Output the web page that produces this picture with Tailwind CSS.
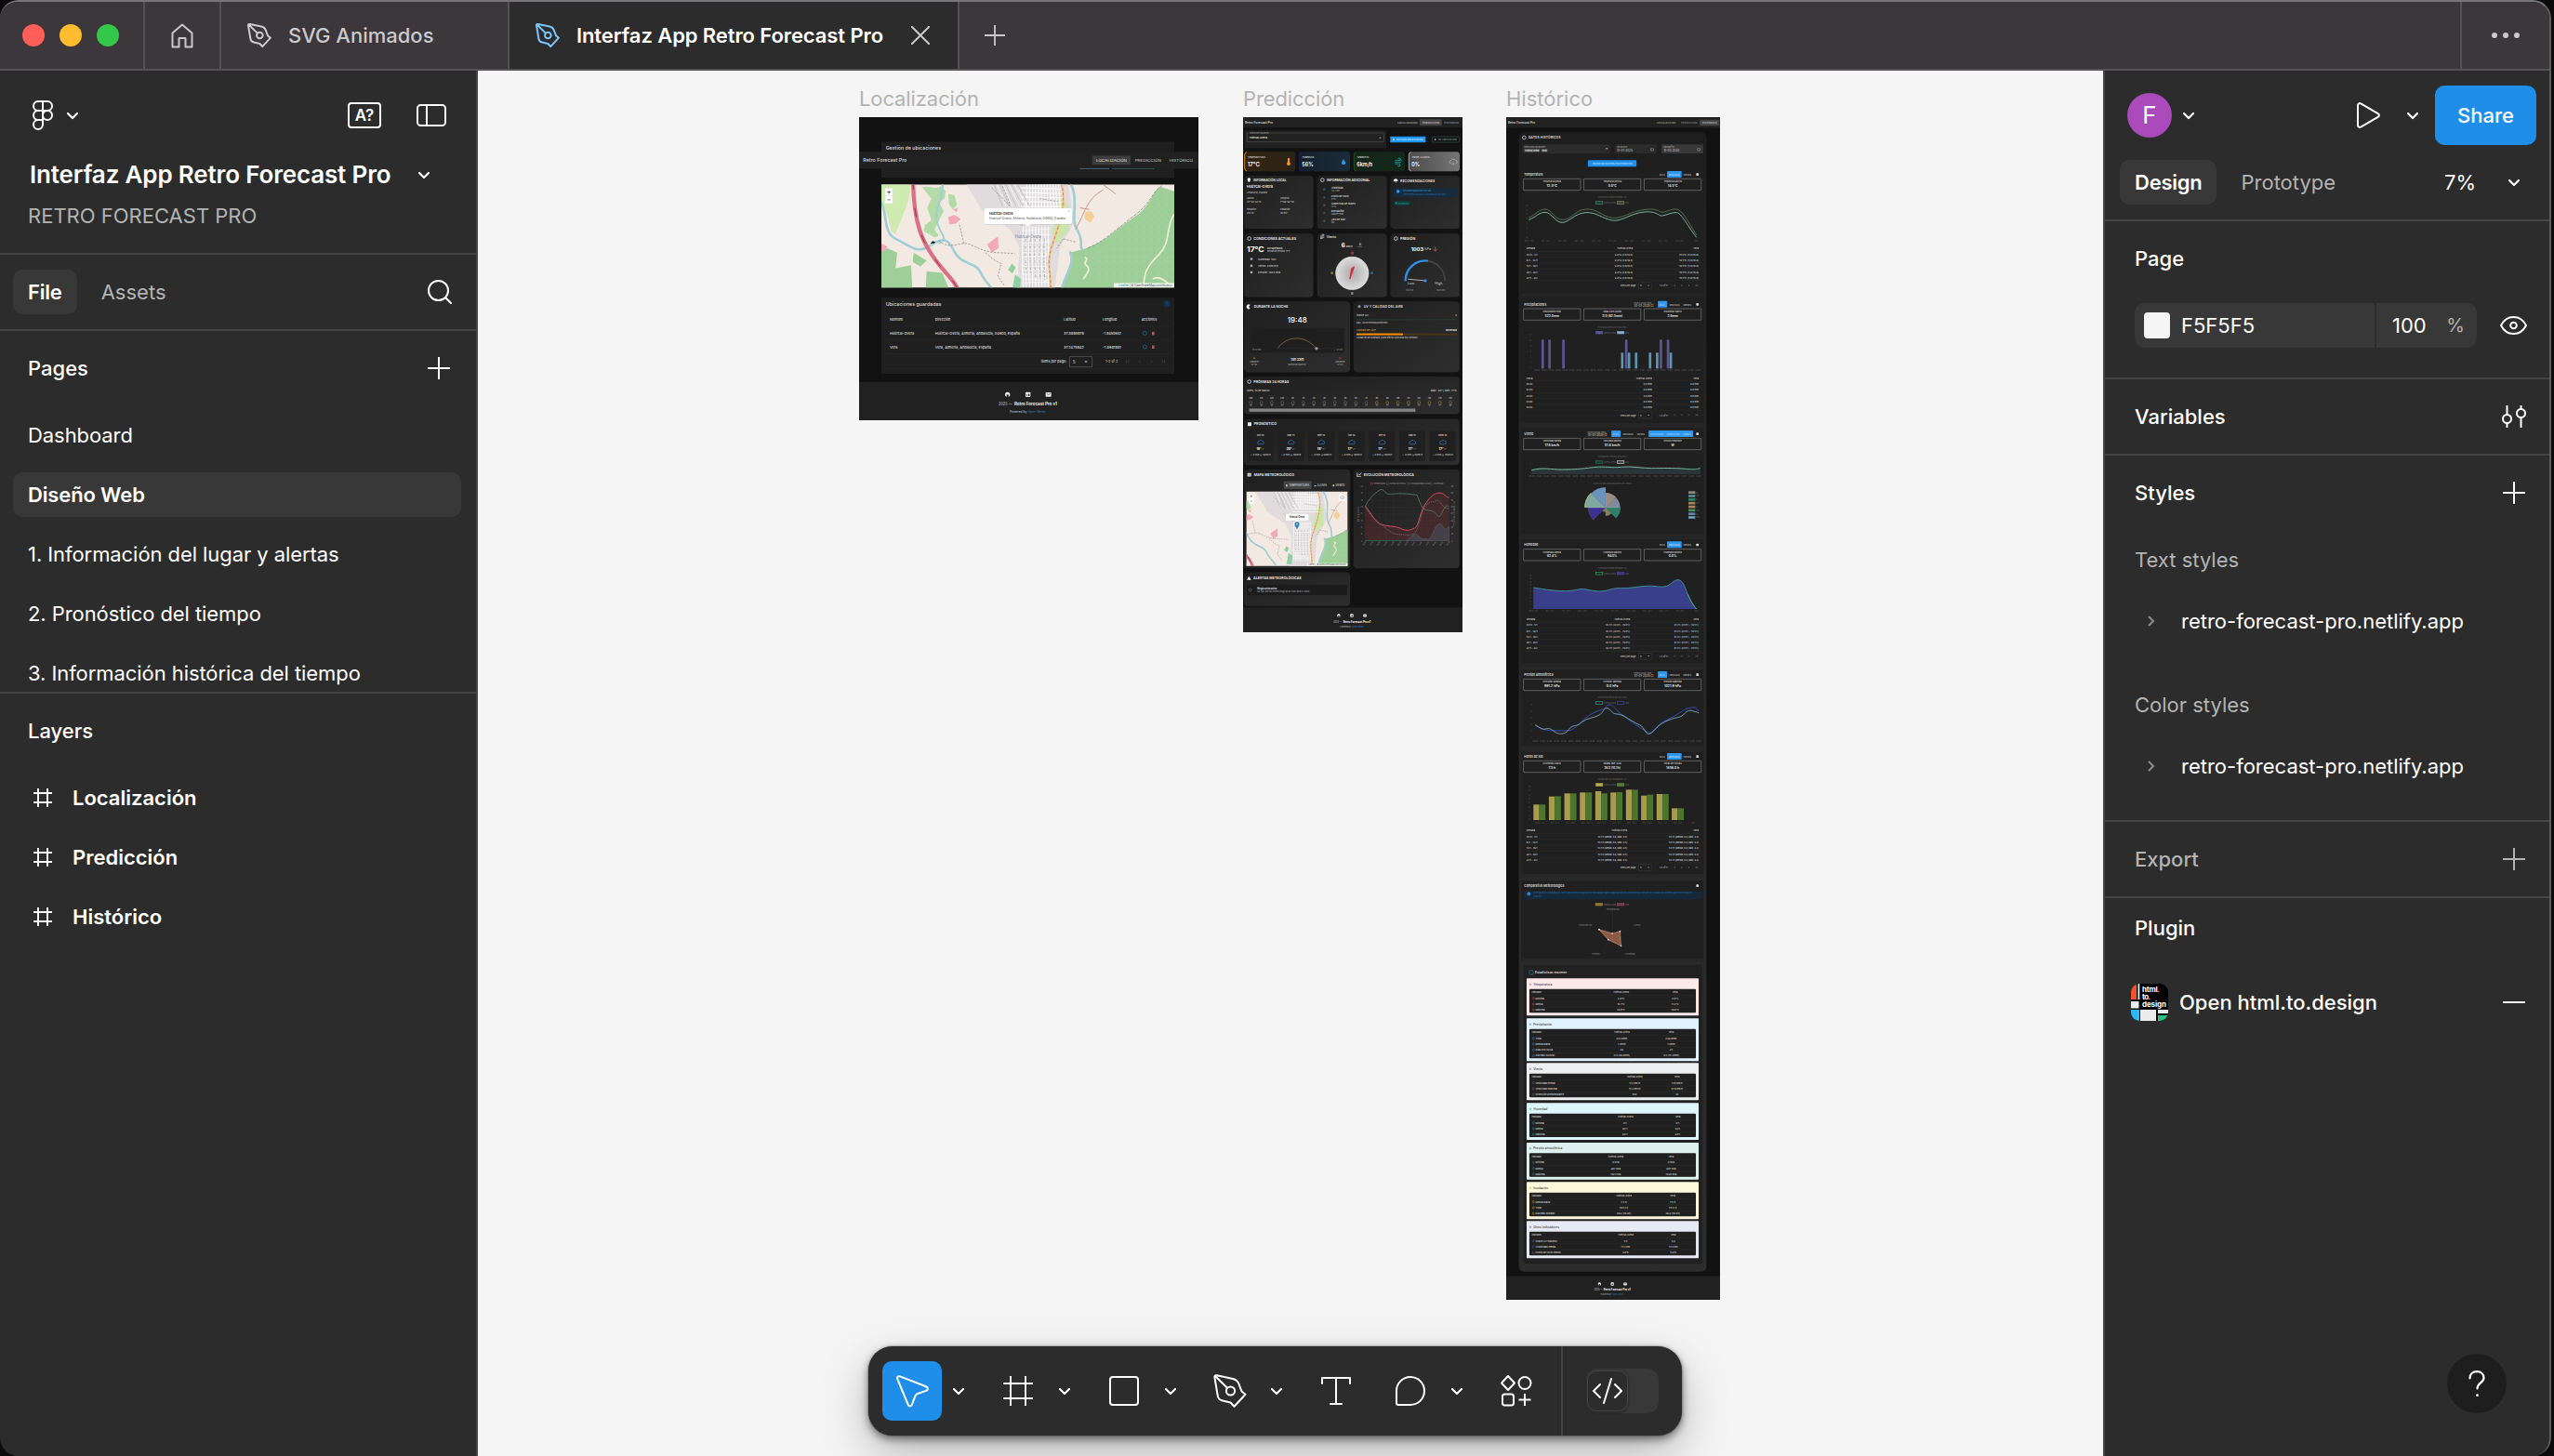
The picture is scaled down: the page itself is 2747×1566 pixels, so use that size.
<!DOCTYPE html>
<html lang="es">
<head>
<meta charset="utf-8">
<title>Interfaz App Retro Forecast Pro</title>
<script src="https://cdn.jsdelivr.net/npm/@tailwindcss/browser@4"></script>
</head>
<body class="h-[1566px] w-[2747px] overflow-hidden bg-[#0b0b0b] font-['Inter',sans-serif] text-[22px] leading-8 text-white antialiased">
<svg class="hidden">
  <symbol id="chev" viewBox="0 0 14 9"><path d="M2 2l5 5 5-5" fill="none" stroke="currentColor" stroke-width="2.2" stroke-linecap="round" stroke-linejoin="round"/></symbol>
  <symbol id="pen" viewBox="0 0 36 36"><g fill="none" stroke="currentColor" stroke-linejoin="round" stroke-linecap="round"><path d="M1.5 3.8C1 1.8 2 1 3.8 1.3L21 5c4 .9 5.500 2.800 6.500 5.500l3 8 4 3.200-12 13-4-4.200L10 28.500C7 27.800 5 26 4.700 23zM2.500 2.500L15 14.700"/><circle cx="18.500" cy="18" r="4.600"/></g></symbol>
  <symbol id="frame" viewBox="0 0 32 32"><path d="M8 0v32M24 0v32M0 8h32M0 24h32" fill="none" stroke="currentColor"/></symbol>
  <symbol id="plus" viewBox="0 0 24 24"><path d="M12 0v24M0 12h24" fill="none" stroke="currentColor" stroke-width="2"/></symbol>
</svg>

<div class="flex h-[1566px] w-[2744px] flex-col overflow-hidden rounded-[20px] border-t-2 border-r-2 border-t-[#77757a] border-r-[#5c5c5c] bg-[#2c2c2c]">
  <!-- Window tabs -->
  <header class="flex h-[74px] shrink-0 items-stretch border-b-2 border-[#545255] bg-[#3b373b] text-[#cbc9cb]">
    <div class="flex w-[156px] items-center gap-4 border-r-2 border-[#545255] pl-6">
      <span class="size-6 rounded-full bg-[#ff5f57]"></span>
      <span class="size-6 rounded-full bg-[#febc2e]"></span>
      <span class="size-6 rounded-full bg-[#34c749]"></span>
    </div>
    <div class="flex w-[82px] items-center justify-center border-r-2 border-[#545255]">
      <svg class="h-[27px] w-6" viewBox="0 0 24 27" fill="none" stroke="currentColor" stroke-width="2" stroke-linejoin="round"><path d="M1.500 10.500L12 1.500l10.500 9V25.500H15.500V16h-7v9.500h-7z"/></svg>
    </div>
    <div class="flex w-[310px] items-center gap-[18px] border-r-2 border-[#545255] pl-7">
      <svg class="size-[26px]" stroke-width="2.800"><use href="#pen"/></svg>
      <span class="font-medium">SVG Animados</span>
    </div>
    <div class="flex w-[484px] items-center border-r-2 border-[#545255] bg-[#2c2c2c] pl-7 text-white">
      <svg class="mr-[18px] size-[26px] text-[#7cc4f8]" stroke-width="2.800"><use href="#pen"/></svg>
      <span class="whitespace-nowrap font-semibold tracking-[-0.09px]">Interfaz App Retro Forecast Pro</span>
      <svg class="ml-[30px] size-5 text-[#cbc9cb]" viewBox="0 0 20 20" fill="none" stroke="currentColor" stroke-width="2"><path d="M0 0l20 20M20 0L0 20"/></svg>
    </div>
    <div class="flex w-[76px] items-center justify-center"><svg class="size-[22px]"><use href="#plus"/></svg></div>
    <div class="ml-auto flex w-[96px] items-center justify-center border-l-2 border-[#545255]">
      <svg class="h-2 w-8" viewBox="0 0 32 8" fill="currentColor"><circle cx="4" cy="4" r="3"/><circle cx="16" cy="4" r="3"/><circle cx="28" cy="4" r="3"/></svg>
    </div>
  </header>

  <div class="flex min-h-0 flex-1">
    <!-- Left sidebar -->
    <aside class="flex w-[514px] shrink-0 flex-col border-r-2 border-[#444]">
      <div class="flex h-24 shrink-0 items-center pl-[35px] pr-8">
        <svg class="h-8 w-[22px]" viewBox="0 0 22 32" fill="none" stroke="currentColor" stroke-width="2"><path d="M11 1H6a5 5 0 0 0 0 10h5zM11 1h5a5 5 0 0 1 0 10h-5zM11 11H6a5 5 0 0 0 0 10h5zM11 21H6a5 5 0 1 0 5 5z"/><circle cx="16" cy="16" r="5"/></svg>
        <svg class="ml-[14px] h-[9px] w-[14px]"><use href="#chev"/></svg>
        <span class="ml-auto flex h-7 w-9 items-center justify-center rounded border-2 border-white text-[17px] font-semibold leading-none">A?</span>
        <svg class="ml-[38px] h-6 w-8" viewBox="0 0 32 24" fill="none" stroke="currentColor" stroke-width="2"><rect x="1" y="1" width="30" height="22" rx="3.500"/><path d="M11 1v22"/></svg>
      </div>
      <div class="flex h-8 shrink-0 items-center gap-[29px] pl-8">
        <h1 class="whitespace-nowrap text-[26px] font-semibold tracking-[-0.16px]">Interfaz App Retro Forecast Pro</h1>
        <svg class="h-[9px] w-[14px]"><use href="#chev"/></svg>
      </div>
      <div class="flex h-[70px] shrink-0 items-center border-b-2 border-[#444] pb-3 pl-[30px] text-[#b3b3b3]">RETRO FORECAST PRO</div>
      <div class="flex h-[82px] shrink-0 items-center gap-[10px] border-b-2 border-[#444] pl-[14px] pr-[26px]">
        <span class="flex h-12 items-center rounded-[10px] bg-[#383838] px-4 font-semibold tracking-[-0.2px]">File</span>
        <span class="px-4 text-[#b3b3b3]">Assets</span>
        <svg class="ml-auto size-[26px]" viewBox="0 0 26 26" fill="none" stroke="currentColor" stroke-width="2" stroke-linecap="round"><circle cx="11.500" cy="11.500" r="10.500"/><path d="M19 19l6 6"/></svg>
      </div>
      <div class="flex h-20 shrink-0 items-center justify-between pl-[30px] pr-7 font-medium">Pages<svg class="size-6"><use href="#plus"/></svg></div>
      <ul class="h-[308px] shrink-0 overflow-hidden pl-[14px] pr-4 tracking-[-0.07px]">
        <li class="flex h-16 items-center px-4">Dashboard</li>
        <li class="flex h-16 items-center"><span class="flex h-12 w-full items-center rounded-[10px] bg-[#383838] px-4 font-semibold tracking-[-0.15px]">Diseño Web</span></li>
        <li class="flex h-16 items-center px-4">1. Información del lugar y alertas</li>
        <li class="flex h-16 items-center px-4">2. Pronóstico del tiempo</li>
        <li class="flex h-16 items-center px-4">3. Información histórica del tiempo</li>
      </ul>
      <div class="flex h-[82px] shrink-0 items-center border-t-2 border-[#444] pl-[30px] font-medium">Layers</div>
      <ul class="font-semibold">
        <li class="flex h-16 items-center gap-[22px] pl-9"><svg class="size-5" stroke-width="3.200"><use href="#frame"/></svg>Localización</li>
        <li class="flex h-16 items-center gap-[22px] pl-9"><svg class="size-5" stroke-width="3.200"><use href="#frame"/></svg>Predicción</li>
        <li class="flex h-16 items-center gap-[22px] pl-9"><svg class="size-5" stroke-width="3.200"><use href="#frame"/></svg>Histórico</li>
      </ul>
    </aside>

    <!-- Canvas -->
    <main class="relative min-w-0 flex-1 overflow-hidden bg-[#f5f5f5] text-[#b3b3b3]">
      <div class="absolute left-[410px] top-[14px]"><p class="h-9 text-[22px] leading-8 tracking-[-0.1px]">Localización</p><svg id="loc" class="h-[326px] w-[365px]" viewBox="42 137 1095 979" preserveAspectRatio="none"></svg></div>
      <div class="absolute left-[823px] top-[14px]"><p class="h-9 text-[22px] leading-8 tracking-[-0.1px]">Predicción</p><svg id="pre" class="h-[554px] w-[236px]" viewBox="51 137 708 1663" preserveAspectRatio="none"></svg></div>
      <div class="absolute left-[1106px] top-[14px]"><p class="h-9 text-[22px] leading-8">Histórico</p><svg id="his" class="h-[1272px] w-[230px]" viewBox="59 137 691 3816" preserveAspectRatio="none"></svg></div>

      <!-- Toolbar -->
      <div class="absolute left-[420px] top-[1372px] flex h-24 w-[875px] items-center rounded-[26px] bg-[#2c2c2c] pl-[15px] text-white shadow-[0_0_2px_rgba(0,0,0,.6),0_4px_10px_rgba(0,0,0,.5),0_20px_50px_rgba(0,0,0,.25)]">
        <span class="flex size-16 items-center justify-center rounded-[10px] bg-[#1e8ee8]"><svg class="size-[35px]" viewBox="0 0 35 35" fill="none" stroke="currentColor" stroke-width="2" stroke-linejoin="round"><path d="M1.200 4.200C.6 2 2 .6 4 1.400L32 12.200c2.500 1.100 2.300 3.800 0 4.700L23 20c-1.500.5-2.200 1.300-2.800 2.800L17 31.500c-1 2.500-3.500 2.500-4.400 0z"/></svg></span>
        <span class="flex w-9 justify-center"><svg class="h-[9px] w-[14px]"><use href="#chev"/></svg></span>
        <span class="ml-[14px] flex size-16 items-center justify-center"><svg class="size-8" stroke-width="2"><use href="#frame"/></svg></span>
        <span class="flex w-9 justify-center"><svg class="h-[9px] w-[14px]"><use href="#chev"/></svg></span>
        <span class="ml-[14px] flex size-16 items-center justify-center"><svg class="size-8" viewBox="0 0 32 32" fill="none" stroke="currentColor" stroke-width="2"><rect x="1" y="1" width="30" height="30" rx="3"/></svg></span>
        <span class="flex w-9 justify-center"><svg class="h-[9px] w-[14px]"><use href="#chev"/></svg></span>
        <span class="ml-[14px] flex size-16 items-center justify-center"><svg class="size-9" stroke-width="2"><use href="#pen"/></svg></span>
        <span class="flex w-9 justify-center"><svg class="h-[9px] w-[14px]"><use href="#chev"/></svg></span>
        <span class="ml-[14px] flex size-16 items-center justify-center"><svg class="h-[30px] w-8" viewBox="0 0 32 30" fill="none" stroke="currentColor" stroke-width="2" stroke-linecap="round" stroke-linejoin="round"><path d="M1 7V1h30v6M16 1v28M10 29h12"/></svg></span>
        <span class="ml-4 flex size-16 items-center justify-center"><svg class="size-8" viewBox="0 0 32 32" fill="none" stroke="currentColor" stroke-width="2" stroke-linejoin="round"><path d="M1 16a15 15 0 1 1 15 15H3a2 2 0 0 1-2-2z"/></svg></span>
        <span class="flex w-9 justify-center"><svg class="h-[9px] w-[14px]"><use href="#chev"/></svg></span>
        <span class="ml-[14px] flex size-16 items-center justify-center"><svg class="size-[34px]" viewBox="0 0 34 34" fill="none" stroke="currentColor" stroke-width="2" stroke-linejoin="round"><path d="M8 1l7 7.500L8 16 1 8.500zM26 20v13M19.500 26.500h13"/><circle cx="26" cy="8.500" r="6.500"/><rect x="2" y="20.500" width="12" height="12" rx="2.500"/></svg></span>
        <span class="ml-4 h-24 w-0.5 bg-[#444]"></span>
        <span class="ml-[25px] flex h-12 w-[78px] items-center rounded-[12px] bg-[#383838] pl-px">
          <span class="flex h-11 w-11 items-center justify-center rounded-[10px] border border-[#444] bg-[#2c2c2c] shadow-[0_1px_3px_rgba(0,0,0,.4)]"><svg class="h-[30px] w-8 shrink-0" viewBox="0 0 32 30" fill="none" stroke="currentColor" stroke-width="2" stroke-linecap="round" stroke-linejoin="round"><path d="M8 8l-7 7 7 7M24 8l7 7-7 7M20 2l-8 26"/></svg></span>
        </span>
      </div>
    </main>

    <!-- Right sidebar -->
    <aside class="relative flex w-[480px] shrink-0 flex-col border-l-2 border-[#444]">
      <div class="flex h-24 shrink-0 items-center pl-6 pr-[14px]">
        <span class="flex size-12 items-center justify-center rounded-full bg-[#ab4abb] text-[26px]">F</span>
        <svg class="ml-[11px] h-[9px] w-[14px]"><use href="#chev"/></svg>
        <svg class="ml-auto h-[28px] w-[25px]" viewBox="0 0 25 28" fill="none" stroke="currentColor" stroke-width="2" stroke-linejoin="round"><path d="M1 3.500C1 1.300 2.800.5 4.600 1.600l18 10.600c1.800 1.100 1.800 2.500 0 3.600l-18 10.600C2.800 27.500 1 26.700 1 24.500z"/></svg>
        <svg class="ml-7 h-[9px] w-[14px]"><use href="#chev"/></svg>
        <span class="ml-[17px] flex h-16 w-[109px] items-center justify-center rounded-[10px] bg-[#1e8ee8] font-medium">Share</span>
      </div>
      <div class="flex h-[66px] shrink-0 items-start border-b-2 border-[#444] pl-4 pr-[31px]">
        <span class="flex h-12 items-center rounded-[10px] bg-[#383838] px-4 font-semibold tracking-[-0.25px]">Design</span>
        <span class="ml-[26px] flex h-12 items-center text-[#b3b3b3]">Prototype</span>
        <span class="ml-auto flex h-12 items-center">7%</span>
        <span class="ml-[34px] flex h-12 items-center"><svg class="h-[9px] w-[14px]"><use href="#chev"/></svg></span>
      </div>
      <div class="flex h-20 shrink-0 items-center pl-8 font-medium">Page</div>
      <div class="flex h-[90px] shrink-0 items-start justify-between border-b-2 border-[#444] pl-8 pr-6 pt-2">
        <div class="flex h-12 w-[368px] items-center rounded-[10px] bg-[#383838] pl-[10px]">
          <span class="size-7 rounded bg-[#f5f5f5]"></span><span class="ml-3 w-[208px]">F5F5F5</span>
          <span class="flex h-12 flex-1 items-center justify-between border-l-2 border-[#2c2c2c] pl-[17px] pr-[13px]">100<span class="text-[20px] text-[#b3b3b3]">%</span></span>
        </div>
        <span class="flex h-12 items-center"><svg class="h-5 w-[29px]" viewBox="0 0 29 20" fill="none" stroke="currentColor" stroke-width="2"><path d="M1 10C4 4 9 1 14.500 1S25 4 28 10c-3 6-8 9-13.500 9S4 16 1 10z"/><circle cx="14.500" cy="10" r="3.300"/></svg></span>
      </div>
      <div class="flex h-[82px] shrink-0 items-center justify-between border-b-2 border-[#444] pl-8 pr-[25px] font-medium">Variables<svg class="h-6 w-[26px]" viewBox="0 0 26 24" fill="none" stroke="currentColor" stroke-width="2"><circle cx="5.500" cy="14.500" r="4.500"/><path d="M5.500 0v10M5.500 19v5M20.500 0v4M20.500 13v11"/><circle cx="20.500" cy="8.500" r="4.500"/></svg></div>
      <div class="flex h-20 shrink-0 items-center justify-between pl-8 pr-[26px] font-medium">Styles<svg class="size-6"><use href="#plus"/></svg></div>
      <div class="flex h-16 shrink-0 items-center pl-8 text-[#b3b3b3]">Text styles</div>
      <div class="flex h-[68px] shrink-0 items-center gap-[28px] pl-[46px]"><svg class="h-3 w-2" viewBox="0 0 8 12" fill="none" stroke="#8c8c8c" stroke-width="2"><path d="M1 1l5 5-5 5"/></svg>retro-forecast-pro.netlify.app</div>
      <div class="mt-6 flex h-16 shrink-0 items-center pl-8 text-[#b3b3b3]">Color styles</div>
      <div class="flex h-[94px] shrink-0 items-center gap-[28px] border-b-2 border-[#444] pb-6 pl-[46px]"><svg class="h-3 w-2" viewBox="0 0 8 12" fill="none" stroke="#8c8c8c" stroke-width="2"><path d="M1 1l5 5-5 5"/></svg>retro-forecast-pro.netlify.app</div>
      <div class="flex h-[82px] shrink-0 items-center justify-between border-b-2 border-[#444] pl-8 pr-[26px] font-medium text-[#b3b3b3]">Export<svg class="size-6"><use href="#plus"/></svg></div>
      <div class="flex h-16 shrink-0 items-center pl-8 font-medium">Plugin</div>
      <div class="flex h-24 shrink-0 items-center pl-7 pr-[26px] font-medium">
        <svg class="size-10 rounded-[9px]" viewBox="0 0 40 40"><rect width="40" height="40" fill="#000"/><path d="M0 0h6v17H0z" fill="#f0532d"/><path d="M7.500 0h1.800v17H7.500zM0 19h8.500v7.500H0zM10 28h17v12H10zM29 28h11v4H29z" fill="#ececec"/><path d="M0 28h9v12H0z" fill="#2eb6f5"/><path d="M29 34h11v6H29z" fill="#2cc07c"/><g fill="#fff" font-size="8" font-weight="700"><text x="12" y="9" textLength="19">html.</text><text x="12" y="17" textLength="9">to.</text><text x="12" y="25" textLength="26">design</text></g></svg>
        <span class="ml-3 whitespace-nowrap">Open html.to.design</span>
        <span class="ml-auto h-0.5 w-6 bg-white"></span>
      </div>
      <span class="absolute bottom-[46px] right-[46px] flex size-16 items-center justify-center rounded-full bg-[#1e1e1e]"><svg class="h-7 w-[18px]" viewBox="0 0 18 28" fill="none" stroke="currentColor" stroke-width="2.200" stroke-linecap="round"><path d="M1.500 8.500C1.500 4 4.500 1.200 9 1.200S16.500 4 16.500 8c0 5-7 5.500-7 11.500"/><path d="M9.500 26.500v.3" stroke-width="2.600"/></svg></span>
    </aside>
  </div>
</div>

<script>
const esc = s => String(s).replace(/&/g, '&amp;').replace(/</g, '&lt;');
const T = (x, y, s, t, f = '#d8d8d8', a = 'start', w = 400) => `<text x="${x}" y="${y}" font-size="${s}" fill="${f}" text-anchor="${a}" font-weight="${w}">${esc(t)}</text>`;
const TL = (x, y, s, t, len, f = '#d8d8d8', w = 400) => `<text x="${x}" y="${y}" font-size="${s}" fill="${f}" font-weight="${w}" textLength="${len}" lengthAdjust="spacingAndGlyphs">${esc(t)}</text>`;
const R = (x, y, w, h, f, r = 0, s = 'none', sw = 2) => `<rect x="${x}" y="${y}" width="${w}" height="${h}" fill="${f}" rx="${r}" stroke="${s}" stroke-width="${sw}"/>`;
const P = (d, s, w = 2, f = 'none', e = '') => `<path d="${d}" stroke="${s}" stroke-width="${w}" fill="${f}" ${e}/>`;
const C = (x, y, r, f = 'none', s = 'none', w = 2) => `<circle cx="${x}" cy="${y}" r="${r}" fill="${f}" stroke="${s}" stroke-width="${w}"/>`;

// Street map of Huércal-Overa, shared by two screens
function town() {
  let o = R(60, 300, 1040, 440, '#f2eae2');
  o += P('M110 340H208C215 400 170 480 160 515L145 505C140 450 110 420 110 380Z', 'none', 0, '#cdebb0');
  o += P('M245 362C270 358 290 372 305 360L322 375 318 400 300 412 315 440 300 470 285 500 300 520 285 525 250 505 255 485 275 470 262 430 275 400ZM330 385l20 5 8 30-14 16-12-18z', 'none', 0, '#b3dba8');
  o += P('M110 550L165 575 160 625 210 615 215 720H110ZM218 575L260 600 240 620 215 605ZM260 635L310 640 345 720H255Z', 'none', 0, '#9fcf98');
  o += P('M770 562C830 545 870 500 930 460S985 375 1015 362L1070 380V720H690C690 660 735 620 722 575Z', 'none', 0, '#9fcf98');
  for (let y = 400; y < 690; y += 22) for (let x = 730; x < 1060; x += 24) if (x + y > 1400) o += C(x + (y % 44 ? 0 : 12), y, 2.500, '#93c78d');
  o += P('M380 340L715 340 735 480 690 560 670 720H550L560 560 530 500 440 440Z', 'none', 0, '#e0dcde');
  o += P('M690 400L715 420 720 500 680 545 665 510Z', 'none', 0, '#cbe6a8');
  o += P('M535 610l12 12-10 20-14-12zM545 645l20 15-5 40h-25z', 'none', 0, '#8fd0a0');
  for (let i = 0; i < 13; i++) o += P(`M${585 + i * 9} 335l${-4 + i} 95`, '#fff', 3);
  for (let i = 0; i < 7; i++) o += P(`M565 ${350 + i * 15}l135 ${6 - i}`, '#fff', 3);
  for (let i = 0; i < 9; i++) o += P(`M${470 + i * 9} 335l${35 + i * 2} 90`, i % 2 ? '#fff' : '#b9b4b6', 2);
  for (let i = 0; i < 9; i++) o += P(`M${572 + i * 10} 490q${-6 + i} 90 0 195`, '#fff', 3);
  for (let i = 0; i < 13; i++) o += P(`M566 ${505 + i * 14}l92 ${-8 + (i * 5) % 14}`, '#fff', 2);
  for (let i = 0; i < 5; i++) o += P(`M${580 + i * 15} 530q-4 60 2 ${110 + i * 7}`, '#8a888d', 2, 'none', 'stroke-dasharray="9 6 3 5"');
  o += P('M470 365l60 60M500 350l30 70M520 450l50 40M640 350l50 -4M625 400l60 10', '#8b878a', 2, 'none', 'stroke-dasharray="7 4"');
  o += P('M455 548L490 522 492 560 470 575ZM330 460l20-8 20 14-15 14-22 4zM115 545l18 10-8 15h-14zM345 435l16-5-4 15z', 'none', 0, '#f4a9b6');
  o += P('M770 445l20-5 12 18-14 20-18-12z', 'none', 0, '#f3cf9c');
  o += P('M112 410C135 450 118 510 160 530S230 582 272 552 330 530 350 572 420 605 435 640 470 680 490 720', '#a2cdd8', 8);
  o += P('M310 340C320 400 280 430 295 480S330 520 300 545', '#a2cdd8', 6);
  o += P('M715 335C760 400 720 460 745 500S750 550 762 565M722 570C745 620 700 640 690 720', '#a2cdd8', 8);
  o += P('M690 335C720 420 680 500 662 560S668 660 658 720', '#f0c084', 7) + P('M690 335C720 420 680 500 662 560S668 660 658 720', '#b06a5a', 2, 'none', 'stroke-dasharray="8 8"');
  o += P('M216 340C218 480 245 540 290 600S350 660 372 720', '#dc6f84', 13);
  o += P('M216 340C218 480 245 540 290 600S350 660 372 720', '#8d3a4a', 3, 'none', 'stroke-dasharray="30 60"');
  o += P('M300 535C330 570 370 535 400 548S450 575 500 575L545 578M450 575L480 600 500 610 490 650 510 680M380 545L365 480M700 530L680 560M740 540L700 530', '#8d7b72', 2, 'none', 'stroke-dasharray="7 4"');
  o += P('M740 500C770 450 775 400 830 372M830 355l40 30M755 430l30 5', '#c08a72', 2.500);
  o += P('M780 560C830 540 870 500 930 455S980 385 1020 358', '#777', 2, 'none', 'stroke-dasharray="10 4"');
  o += P('M770 590c20 5-10 15 5 25s5 25-10 45M1059 450C1030 490 1050 540 1010 580S960 640 960 690M990 660c20-15 40 10 60 20', '#f3efd6', 5);
  return o;
}
const footer = (cx, y, k) => {
  const ic = 66 * k;
  return C(cx - ic, y, 8 * k, '#eee') + R(cx - ic - 3 * k, y, 6 * k, 9 * k, '#212121') + R(cx - 8 * k, y - 8 * k, 16 * k, 16 * k, '#eee', 2) + R(cx - 4 * k, y - 2 * k, 2 * k, 7 * k, '#212121') + R(cx + k, y - 2 * k, 4 * k, 7 * k, '#212121') +
    R(cx + ic - 9 * k, y - 7 * k, 18 * k, 14 * k, '#eee', 2) + P(`M${cx + ic - 7 * k} ${y - 4 * k}l${7 * k} ${5 * k} ${7 * k} ${-5 * k}`, '#212121', 1.500);
};
const DOT = s => `stroke-dasharray="${s}"`;

// ---------- Localización ----------
{
  let o = R(42, 137, 1095, 979, '#121212') + R(114, 216, 945, 117, '#1f1f1f') + TL(128, 242, 15.500, 'Gestión de ubicaciones', 178, '#ddd', 500);
  o += R(42, 249, 1095, 54, '#212121') + TL(55, 281, 15, 'Retro Forecast Pro', 141, '#ddd', 500);
  o += R(794, 262, 124, 29, '#3d3d3d', 2) + TL(807, 281, 12, 'LOCALIZACIÓN', 99, '#e4e4e4') + TL(932, 281, 12, 'PREDICCIÓN', 85, '#ccc') + TL(1043, 281, 12, 'HISTÓRICO', 76, '#ccc');
  o += P('M754 303.500h95', '#5b88ab', 2) + P('M858 303.500h137', '#3f6f6c', 2);
  o += `<clipPath id="c1"><rect x="114" y="355" width="945" height="332"/></clipPath><g clip-path="url(#c1)">${town()}</g>`;
  o += R(125, 366, 26, 50, '#fff', 3, '#ccc', 1) + P('M125 391h26', '#ccc', 1) + P('M133 379h11M138.500 374v11M134 404h9', '#222', 2);
  o += P('M272 545l8-8 8 3-4 5z', 'none', 0, '#111') + TL(545, 527, 13, 'Huércal-Overa', 84, '#777');
  o += R(446, 433, 284, 52, '#bbb6', 7) + R(446, 431, 283, 51, '#fff', 7) + P('M577 482l10 9 10-9z', 'none', 0, '#fff') + TL(462, 453, 11.500, 'Huércal-Overa', 76, '#333', 700) + TL(462, 467, 10.500, 'Huércal-Overa, Almería, Andalucía, 04600, España', 246, '#444') + P('M717 438l5 5M722 438l-5 5', '#999', 1.500);
  o += R(864, 673, 195, 14, '#ffffffcc') + TL(880, 683, 10, 'Leaflet', 32, '#2a7fb8') + TL(914, 683, 10, '| © OpenStreetMap contributors', 138, '#444');
  o += R(114, 720, 945, 246, '#1f1f1f') + TL(128, 747, 15.500, 'Ubicaciones guardadas', 179, '#ddd', 500) + C(1035, 740, 11, '#16324f') + T(1035, 745, 13, 'i', '#2c7fd0', 'middle');
  [['Nombre', 'Dirección', 'Latitud', 'Longitud', 'Acciones', 795], ['Huércal-Overa', 'Huércal-Overa, Almería, Andalucía, 04600, España', '37.3895979', '-1.9450652', '', 840], ['Vera', 'Vera, Almería, Andalucía, España', '37.2475942', '-1.8681981', '', 884]].forEach((r, i) => {
    const y = r[5], W = [[43, 50, 38, 46, 50], [78, 274, 66, 60, 0], [25, 181, 66, 60, 0]][i];
    [141, 287, 702, 828, 953].forEach((x, j) => { if (r[j]) o += TL(x, y, 12, r[j], W[j], '#ddd', 500); });
    o += P(`M128 ${y + 18}H1046`, '#303030', 1.500);
    if (i) o += C(964, y - 5, 6, 'none', '#1b78a8') + R(987, y - 10, 8, 11, '#b8505c', 1);
  });
  o += TL(629, 931, 12, 'Items per page:', 83, '#ddd', 500) + R(721, 910, 73, 34, 'none', 2, '#777', 1.500) + T(732, 932, 13, '5', '#eee') + P('M769 925l5 5 5-5z', 'none', 0, '#ddd') + TL(837, 931, 12, '1-2 of 2', 40) + P('M905 921v11M914 921l-5 5 5 5M950 921l-5 5 5 5M983 921l5 5-5 5M1019 921l5 5-5 5M1028 921v11', '#555', 1.500);
  o += P('M128 949H1046', '#2a2a2a', 1.500) + R(42, 992, 1095, 124, '#212121') + footer(587, 1033, 1) + TL(492, 1067, 12.500, '2025 —', 44, '#ddd') + TL(543, 1067, 12.500, 'Retro Forecast Pro v1', 138, '#fff', 600) + TL(528, 1091, 10.500, 'Powered by', 55, '#ccc') + TL(587, 1091, 10.500, 'Open-Meteo', 57, '#2e7cc0');
  document.getElementById('loc').innerHTML = o;
}

// ---------- Predicción ----------
{
  const card = (x, y, w, h) => R(x, y, w, h, 'url(#cg)', 12, '#2c2c2c', 1);
  let o = `<defs><linearGradient id="cg" x1="0" y1="0" x2="1" y2="1"><stop stop-color="#1f1f1f"/><stop offset="1" stop-color="#2e2e2e"/></linearGradient>
  <linearGradient id="o1"><stop stop-color="#33240f"/><stop offset="1" stop-color="#2a231a"/></linearGradient><linearGradient id="o2"><stop stop-color="#15202c"/><stop offset="1" stop-color="#1c2c3a"/></linearGradient><linearGradient id="o3"><stop stop-color="#16241a"/><stop offset="1" stop-color="#14281a"/></linearGradient><linearGradient id="o4"><stop stop-color="#4d4d4d"/><stop offset="1" stop-color="#757575"/></linearGradient><radialGradient id="dial"><stop stop-color="#aaa"/><stop offset="1" stop-color="#dcdcdc"/></radialGradient></defs>`;
  o += R(51, 137, 708, 1663, '#121212') + R(51, 137, 708, 34, '#212121') + TL(57, 158, 9.500, 'Retro Forecast Pro', 90, '#ddd', 600) + TL(549, 158, 8, 'LOCALIZACIÓN', 64, '#ccc') + R(620, 144, 72, 20, '#444', 2) + TL(630, 158, 8, 'PREDICCIÓN', 55, '#ddd') + TL(700, 158, 8, 'HISTÓRICO', 47, '#aaa');
  o += R(56, 180, 457, 57, '#212121') + R(64, 188, 441, 29, 'none', 2, '#666', 1.500) + R(70, 184, 66, 8, '#212121') + TL(72, 192, 7, 'Seleccione ubicación', 62, '#bbb') + TL(72, 206, 8, 'Huércal-Overa', 57, '#eee', 600) + P('M489 202l4 4 4-4z', 'none', 0, '#aaa');
  o += R(526, 199, 114, 20, '#2196f3', 2) + C(537, 209, 3, '#cfe6fb') + TL(546, 213, 8, 'ACTUALIZAR DATOS', 86, '#d8ecff', 600) + R(661, 200, 88, 18, 'none', 2, '#3d6a66', 1.500) + C(671, 209, 3, '#9aa') + TL(681, 213, 8, 'MI UBICACIÓN', 60, '#8ba');
  [[55, 'o1', '#fb8c00', 'TEMPERATURA', '17°C', 40], [231, 'o2', '#1010d0', 'HUMEDAD', '56%', 37], [408, 'o3', '#1b5e20', 'VIENTO', '6km/h', 50], [585, 'o4', '#bbb', 'PROB. LLUVIA', '0%', 26]].forEach(([x, g, c, l, v, w], i) => {
    o += R(x, 249, 165, 63, `url(#${g})`, 10) + P(`M${x + 8} 250q-7 2-7 9v43q0 7 7 9`, c, 2.500) + TL(x + 11, 270, 7.500, l, i == 0 || i == 3 ? 57 : 38, '#ddd', 600) + TL(x + 10, 295, 18, v, w, '#fff', 600);
  });
  o += R(195, 268, 6, 16, '#ff9420', 3) + C(198, 287, 6, '#ff9420') + P('M375 273q6 8 6 12a6 6 0 0 1-12 0q0-4 6-12z', 'none', 0, '#2d9be8') + P('M541 277h14a4 4 0 1 0-4-5M541 283h19M541 288h12a4 4 0 1 1-3 5M557 272q6 2 4 8', '#1ba6b4', 2.500) + P('M722 287a5 5 0 0 1 0-10a8 8 0 0 1 14-1a5.500 5.500 0 0 1 1 11M726 285v6M731 285v8', '#bbb', 2);
  const head = (x, y, t, w) => C(x, y - 4, 5.500, 'none', '#eee', 2.200) + TL(x + 14, y, 11, t, w, '#eee', 600);
  [[55, 327, 222, 170], [291, 327, 224, 170], [527, 327, 222, 170], [55, 513, 222, 205], [291, 513, 224, 205], [527, 513, 222, 205], [55, 732, 341, 228], [408, 732, 341, 228], [55, 975, 694, 120], [55, 1112, 694, 148], [55, 1275, 341, 318], [408, 1275, 341, 318], [55, 1607, 341, 108]].forEach(a => o += card(...a));
  o += P('M70 333a5 5 0 0 1 5 5q0 4-5 10q-5-6-5-10a5 5 0 0 1 5-5', 'none', 0, '#fff') + TL(84, 344, 11, 'INFORMACIÓN LOCAL', 107, '#eee', 600) + TL(63, 366, 12, 'Huércal-Overa', 84, '#eee', 600) + TL(63, 382, 8, 'Andalucía, España', 66);
  [[63, 401, 'Latitud', 22], [171, 401, 'Longitud', 28], [63, 413, '37°23\'22"N', 46], [171, 413, '1°56\'42"W', 45], [63, 438, 'Elevación', 30], [171, 438, 'Población', 31], [63, 450, '282 m', 22], [171, 450, '19 mil', 22]].forEach(([x, y, t, w]) => o += TL(x, y, 7.500, t, w, '#ccc', 500));
  o += head(307, 344, 'INFORMACIÓN ADICIONAL', 139);
  [['Visibilidad', '24.1 km', 38, 26, 368], ['Punto de rocío', '8°C', 56, 15, 394], ['Cobertura de nubes', '12%', 77, 16, 419], ['Elevación', 'Sobre mar', 41, 40, 444], ['¿Es de día?', 'No', 46, 10, 470]].forEach(([a, b, w, v, y], i) => o += R(309, y - 1, 8, 7, i < 2 ? '#27506e' : '#484848', 3) + TL(336, y, 8, a, w, '#ddd', 600) + TL(336, y + 9, 7, b, v, '#bbb'));
  o += P('M537 343a6.500 6.500 0 0 1 13 0zM543.500 343v6', '#fff', 1.500, '#fff') + TL(558, 348, 11, 'RECOMENDACIONES', 112, '#e6dcdc', 600) + R(537, 366, 204, 30, '#172b3c', 4) + C(551, 377, 5.500, '#2f90e6') + TL(567, 377, 8, 'Recomendaciones del día', 90, '#2f80c6', 600) + TL(567, 388, 7, 'Lleve protección solar si va a estar al aire libre', 137, '#2a6ca5') + R(537, 407, 55, 15, '#113b38', 7) + C(545, 414.500, 3, '#1a9c8c') + TL(551, 418, 7, 'Protector', 35, '#26a69a');
  o += head(71, 533, 'CONDICIONES ACTUALES', 137) + TL(63, 572, 23, '17°C', 56, '#fff', 700) + TL(129, 562, 8, 'Despejado', 49, '#ddd', 600) + TL(129, 573, 8, 'Sensación térmica: 15°C', 74, '#ccc', 500);
  [['Humedad: 56%', 61, 598], ['Viento: 6 km/h N', 65, 620], ['Presión: 1003 hPa', 72, 641]].forEach(([t, w, y]) => o += C(78, y - 3, 4, '#aaa') + TL(99, y, 8, t, w, '#ddd', 500));
  o += P('M300 521h9a3 3 0 1 0-3-3M300 525h13M300 529h8', '#eee', 2) + TL(320, 528, 11, 'Viento', 31, '#eee', 500) + TL(368, 557, 17, '6', 12, '#fff', 700) + TL(384, 556, 8, 'km/h', 20, '#ddd', 600) + TL(425, 550, 12, '8', 7, '#ddd') + TL(421, 558, 5, 'km/h', 14, '#aaa');
  o += C(403, 641, 53, 'url(#dial)', '#e6e6e6', 2) + P('M397 661l-3-4L400 624l12-6z', 'none', 0, '#d3303e');
  o += R(399, 571, 9, 10, '#a33238', 3) + R(334, 636, 8, 8, '#9a6a30', 3) + R(462, 636, 9, 8, '#33607c', 3) + R(399, 701, 8, 9, '#7c8288', 3);
  o += head(544, 533, 'PRESIÓN', 49) + TL(593, 568, 16, '1003', 40, '#fff', 700) + TL(637, 567, 10, 'hPa', 20, '#ddd') + P('M671 555v14M664 563l7 7 7-7', '#d84a58', 2.500) + P('M575 666A64 64 0 0 1 648 601', '#2f8fe8', 7) + P('M648 601A64 64 0 0 1 702 666', '#444', 5) + P('M583 660l56 5', '#d8c8c0', 2.500) + C(639, 665, 5, '#2f8fe8') + TL(582, 678, 10, 'Low', 22) + TL(670, 678, 10, 'High', 24) + TL(576, 697, 6, '980 hPa', 24, '#999') + TL(674, 697, 6, '1040 hPa', 28, '#999');
  o += P('M73 743a7 7 0 1 0 0 12a8 8 0 0 1 0-12z', '#fff', 1, '#fff') + TL(86, 753, 11, 'DURANTE LA NOCHE', 110, '#eee', 600) + TL(194, 801, 23, '19:48', 63, '#fff', 500) + R(74, 818, 304, 80, '#1f1f1f', 4) + P('M162 884C195 840 250 840 288 884', '#8a6c3c', 2.500) + P('M162 884H372', '#333', 1.500) + C(288, 884, 5, '#999') + TL(80, 891, 7, '☀ 07:58', 28, '#aaa') + TL(344, 891, 7, '☾ 21:21', 28, '#aaa');
  o += TL(72, 928, 7.500, 'Amanecer', 31, '#bbb') + TL(78, 939, 7, '07:58', 18, '#bbb') + P('M84 915h7', '#a8863c', 3) + TL(205, 924, 12, '13h 23m', 42, '#eee', 600) + TL(196, 937, 7, 'Duración del día de hoy', 58, '#bbb') + TL(348, 928, 7.500, 'Atardecer', 32, '#bbb') + TL(355, 939, 7, '21:21', 18, '#bbb') + P('M360 915h8', '#a84a3c', 3);
  o += C(426, 748, 5, '#888') + TL(440, 753, 11, 'UV Y CALIDAD DEL AIRE', 127, '#ddd', 600) + TL(417, 780, 8, 'Índice UV', 39, '#ddd', 500) + TL(736, 780, 8, '0', 5) + P('M417 791H741', '#33493a', 2) + TL(417, 804, 7.500, 'Bajo - No se necesita protección', 99, '#ccc', 500) + TL(417, 826, 8, 'Calidad del Aire', 62, '#d89a50', 500) + TL(705, 826, 8, 'Moderada', 36, '#eee', 600) + R(417, 835, 324, 6, '#4a331a') + R(417, 835, 150, 6, '#fb8c00') + TL(417, 850, 7.500, 'Calidad del aire aceptable, puede afectar a personas muy sensibles', 197, '#ccc', 500);
  o += head(71, 995, 'PRÓXIMAS 24 HORAS', 114) + TL(63, 1023, 8, 'lunes, 10 de marzo', 73, '#ddd', 500) + TL(656, 1023, 8, 'Máx: 20° | Mín: 11°C', 85, '#ddd', 500);
  for (let i = 0; i < 20; i++) { const x = 76 + i * 33.900, c = i > 11 && i < 19 ? '#b08f34' : i == 19 ? '#9a7f50' : '#777'; o += T(x, 1048, 6, (20 + i) % 24 + 'h', '#ccc', 'middle', 600) + C(x, 1059, 4.500, 'none', c, 1.600) + T(x, 1071, 6, (15 - i % 7) + '°', '#bbb', 'middle'); }
  o += R(66, 1078, 672, 10, '#2a2a2a') + R(71, 1078, 536, 10, '#858585');
  o += R(66, 1122, 12, 12, '#eee', 2) + TL(86, 1132, 11, 'PRONÓSTICO', 73, '#eee', 600);
  ['lun 10', 'mar 11', 'mié 12', 'jue 13', 'vie 14', 'sáb 15', 'dom 16'].forEach((d, i) => {
    const x = 107 + i * 98; o += R(x - 42, 1150, 84, 98, '#202020', 5) + T(x, 1168, 8, d, '#e6d8c4', 'middle', 600) + P(`M${x - 5} 1193a4.500 4.500 0 0 1 0-9a6 6 0 0 1 11-1a5 5 0 0 1 0 10z`, '#2f80c8', 2) + T(x - 5, 1211, 10, ['18°', '20°', '18°', '17°', '17°', '17°', '17°'][i], '#fff', 'middle', 700) + T(x + 9, 1211, 8, '9°', '#777', 'middle') + TL(x - 32, 1230, 7, '☂ 0 mm ◍ 16km/h', 65, '#ccc', 500);
  });
  o += R(65, 1286, 12, 11, '#eee', 1) + P('M69 1286v11M73 1286v11', '#222', 1) + TL(86, 1295, 11, 'MAPA METEOROLÓGICO', 130, '#eee', 600) + R(182, 1312, 90, 26, '#454545', 2) + TL(190, 1329, 8.500, '▮ TEMPERATURA', 74, '#ddd', 500) + TL(280, 1329, 8.500, '☁ LLUVIA', 41, '#ddd', 500) + TL(339, 1329, 8.500, '◉ VIENTO', 40, '#ddd', 500);
  o += `<clipPath id="c2"><rect x="62" y="1346" width="326" height="240"/></clipPath><g clip-path="url(#c2)"><g transform="translate(225 1450) scale(.65) translate(-587 -500)">${town()}</g></g>`;
  o += R(69, 1353, 17, 32, '#fff', 2) + P('M74 1361h7M77.500 1357v7M75 1377h5', '#222', 1.500) + R(360, 1354, 22, 22, '#fff', 3) + P('M364 1363l7-4 7 4-7 4zM364 1367l7 4 7-4', '#888', 1.500) + R(189, 1418, 73, 22, '#fff', 4) + P('M219 1440l6 5 6-5z', 'none', 0, '#fff') + TL(201, 1432, 8.500, 'Huércal-Overa', 48, '#222', 700) + P('M225 1466q-7-9-7-15a7 7 0 0 1 14 0q0 6-7 15z', '#1d5d8c', 1, '#2a81cb') + C(225, 1451, 2.500, '#fff') + R(258, 1577, 130, 9, '#ffffffcc') + TL(262, 1584, 7, 'Leaflet | © OpenStreetMap contributors', 122, '#555');
  // Forecast evolution chart
  o += P('M419 1285v12h13M421 1294l4-5 3 3 5-7', '#eee', 2) + TL(440, 1295, 11, 'EVOLUCIÓN METEOROLÓGICA', 163, '#eee', 600);
  [[462, 'Temperatura', '#b0444e', 37], [515, 'Sensación térmica', '#4d6a5e', 50], [582, 'Probabilidad lluvia', '#4a6a70', 61], [655, 'Humedad', '#555', 31]].forEach(([x, t, c, w]) => o += R(x, 1317, 8, 6, 'none', 0, c, 1.500) + TL(x + 11, 1323, 6.500, t, w, '#999'));
  for (let i = 0; i < 9; i++) o += P(`M445 ${1330 + i * 22}H715`, '#333', 1) + T(434, 1332 + i * 22, 5.500, 20 - i * 2, '#999', 'middle') + T(725, 1332 + i * 22, 5.500, 100 - i * 12, '#999', 'middle');
  for (let i = 0; i < 13; i++) o += P(`M${445 + i * 22.500} 1330V1504`, '#333', 1) + `<text transform="translate(${440 + i * 22.500} 1521) rotate(-55)" font-size="6" fill="#999">${String((20 + 2 * i) % 24).padStart(2, 0)}:00</text>`;
  const tmp = 'M445 1392C460 1410 475 1440 493 1450S540 1455 560 1465 590 1470 604 1464 620 1420 634 1395 665 1350 684 1350 702 1364 715 1365';
  o += P(tmp + 'V1504H445Z', 'none', 0, '#8b2c3a44') + P('M576 1504C590 1500 595 1484 607 1484S622 1502 634 1499 650 1508 658 1492 675 1448 686 1450 700 1480 715 1458V1504Z', '#667', 1.500, '#45464ecc');
  o += P('M445 1504H576', '#2f7a5a', 2) + P('M445 1395C455 1370 475 1352 490 1342S508 1354 523 1354 560 1349 612 1357C620 1375 625 1395 634 1402S660 1405 668 1412 680 1430 686 1425 705 1380 715 1395', '#5c7a70', 2.500) + P('M445 1396C465 1425 480 1445 495 1452S525 1482 550 1484 590 1490 604 1480 625 1410 640 1392 665 1382 675 1375 695 1405 715 1400', '#777c79', 2, 'none', DOT('4 2')) + P(tmp, '#d24a5e', 3);
  o += `<text transform="translate(426 1444) rotate(-90)" font-size="6" fill="#999">Temperatura (°C)</text><text transform="translate(736 1458) rotate(-90)" font-size="6" fill="#999">Probabilidad / Humedad (%)</text>`;
  o += P('M70 1619l7 12H63z', 'none', 0, '#fff') + TL(84, 1628, 11, 'ALERTAS METEOROLÓGICAS', 155, '#eee', 600) + R(63, 1647, 324, 33, '#1c1c1c', 4) + C(74, 1663, 4, 'none', '#888', 1.500) + TL(97, 1662, 9, 'Ningún aviso activo', 63, '#eee', 600) + TL(97, 1672, 7.500, 'No hay alertas meteorológicas activas para tu zona', 167, '#aaa');
  o += R(51, 1720, 708, 80, '#212121') + footer(402, 1746, .64) + TL(342, 1769, 8.500, '2025 —', 28, '#ccc') + TL(374, 1769, 8.500, 'Retro Forecast Pro v1', 89, '#fff', 700) + TL(364, 1784, 7, 'Powered by', 35, '#bbb') + TL(402, 1784, 7, 'Open-Meteo', 38, '#2e7cc0');
  document.getElementById('pre').innerHTML = o;
}

// ---------- Histórico ----------
{
  let o = `<defs><linearGradient id="hb" x1="0" y1="0" x2="0" y2="1"><stop stop-color="#1e1e1e"/><stop offset=".3" stop-color="#262626"/><stop offset="1" stop-color="#2c2c2c"/></linearGradient></defs>`;
  o += R(59, 137, 691, 3816, '#121212') + R(59, 137, 691, 34, '#212121') + TL(65, 158, 9.500, 'Retro Forecast Pro', 87, '#ddd', 600) + TL(546, 158, 8, 'LOCALIZACIÓN', 61, '#bbb') + TL(624, 158, 8, 'PREDICCIÓN', 52, '#999') + R(684, 145, 63, 20, '#444', 2) + TL(692, 158, 8, 'HISTÓRICO', 48, '#ddd');
  o += R(100, 186, 606, 3676, 'url(#hb)', 16) + C(117, 203, 5.500, 'none', '#ddd', 2.200) + TL(131, 207, 10.500, 'DATOS HISTÓRICOS', 104, '#ddd', 600);
  o += R(110, 225, 284, 29, '#2b2b2b', 2) + TL(117, 235, 7, 'Selecciona ubicaciones', 69, '#bbb') + R(117, 239, 51, 10, '#555', 4) + TL(120, 247, 7, 'Huércal-Overa', 45, '#fff') + R(172, 239, 21, 10, '#555', 4) + TL(175, 247, 7, 'Vera', 15, '#fff') + P('M380 237l4 4 4-4z', 'none', 0, '#aaa');
  [[410, 'Fecha inicio', '01-01-2025'], [561, 'Fecha fin', '10-03-2025']].forEach(([x, a, b], i) => o += R(x, 225, 135, 29, i ? '#383838' : '#2b2b2b', 2) + TL(x + 7, 235, 7, a, 33, '#bbb') + TL(x + 7, 247, 9, b, 50, '#ddd') + R(x + 116, 238, 9, 7, 'none', 2, '#bbb', 1.500));
  o += R(323, 276, 157, 21, '#2090ea', 2) + TL(334, 290, 8, '⌕ BUSCAR DATOS HISTÓRICOS', 133, '#c6e2fa', 500);
  const sec = (y0, y1) => o += R(108, y0, 588, y1 - y0, '#202020', 4) + R(108, y1 - 6, 588, 10, '#262626', 4);
  const titleRow = (y, t, w, sel, cards) => {
    o += TL(117, y + 4, 11.500, t, w, '#ddd', 600) + R(673, y - 4, 8, 8, '#ddd', 2);
    if (sel == 1) o += TL(555, y + 4, 8, 'DÍAS', 17) + R(579, y - 11, 47, 21, '#2f97ee', 2) + TL(584, y + 4, 8, 'SEMANAS', 36, '#d5eaff') + TL(632, y + 4, 8, 'MESES', 25);
    else if (sel == 0) o += TL(471, y - 2, 7, 'Seleccionar mes', 58, '#999') + TL(473, y + 7, 9, '01-01-2025 ▢', 62, '#ddd') + R(549, y - 11, 30, 21, '#2f97ee', 2) + TL(554, y + 4, 8, 'DÍAS', 18, '#b8dcff') + TL(586, y + 4, 8, 'SEMANAS', 34) + TL(631, y + 4, 8, 'MESES', 26);
    else o += R(320, y - 8, 66, 17, '#2d2d2d', 2) + TL(322, y - 2, 7, 'Seleccionar mes', 58, '#999') + TL(324, y + 7, 9, '01-01-2025 ▢', 60, '#ddd') + R(399, y - 11, 30, 21, '#2f97ee', 2) + TL(404, y + 4, 8, 'DÍAS', 18, '#b8dcff') + TL(436, y + 4, 8, 'SEMANAS', 34) + TL(483, y + 4, 8, 'MESES', 24) + R(519, y - 11, 144, 21, '#2f97ee', 2) + TL(524, y + 4, 8, 'VELOCIDAD', 43, '#b8dcff') + TL(577, y + 4, 8, 'DIRECCIÓN', 42, '#b8dcff') + TL(630, y + 4, 8, 'AMBOS', 26, '#b8dcff');
    cards.forEach(([a, b, wb], i) => { const x = 115 + i * 195; o += R(x, y + 14, 184, 37, 'none', 1, '#8a8a8a', 1.800) + TL(x + 92 - 29, y + 26, 7.500, a, 58, '#ddd', 500) + TL(x + 92 - wb / 2, y + 40, 10.500, b, wb, '#eee', 600); });
  };
  const legend = (y, a, b, t, fa = 'none', fb = 'none') => o += TL(355, y - 14, 7, t, 94, '#666') + R(349, y - 4, 22, 8, fa, 0, a, 2) + TL(375, y + 3, 7, 'Huércal-Overa', 38, '#666') + R(418, y - 4, 22, 8, fb, 0, b, 2) + TL(443, y + 3, 7, 'Vera', 12, '#666');
  const table = (y, h, rows, c2, w2, c3, w3, a, b) => {
    [h, ...rows].forEach((r, i) => { const yy = y + 3 + i * 18.800 + (i ? .5 : 0); o += TL(124, yy, 8, r, i ? (r.length < 7 ? 20 : 36) : (h.length > 5 ? 29 : 20), '#ddd', 500) + (i ? TL(c2 - w2, yy, 8, a, w2, '#ddd', 500) + TL(c3 - w3, yy, 8, b, w3, '#ddd', 500) : TL(c2 - 50, yy, 8, 'Huércal-Overa', 50, '#ddd', 500) + TL(c3 - 17, yy, 8, 'Vera', 17, '#ddd', 500)) + P(`M117 ${y + 9.500 + i * 18.800}H689`, '#333', 1.200); });
    const f = y + 119; o += TL(428, f + 4, 8, 'Items per page:', 52, '#ccc', 500) + R(487, f - 10, 43, 21, 'none', 2, '#444', 1.200) + T(492, f + 4, 8, '5') + P(`M516 ${f - 1}l3 3 3-3z`, 'none', 0, '#ccc') + TL(554, f + 4, 8, '1-5 of 11', 28, '#ccc') + P(`M605 ${f - 3}l-3 3 3 3M628 ${f - 3}l-3 3 3 3M648 ${f - 3}l3 3-3 3M671 ${f - 3}l3 3-3 3M677 ${f - 3}v6`, '#888', 1.500);
  };
  const ticks = (y, n, x0, x1, t) => { for (let i = 0; i < n; i++) o += T(x0 + (x1 - x0) * i / (n - 1), y, 6, t(i), '#606060', 'middle'); };
  const yax = (y0, y1, n, x = 126) => { for (let i = 0; i < n; i++) o += T(x, y0 + (y1 - y0) * i / (n - 1), 6, (n - 1 - i) * 2, '#555', 'middle'); };
  const wk = ['30/12 - 5/1', '6/1 - 12/1', '13/1 - 19/1', '20/1 - 26/1', '27/1 - 2/2', '3/2 - 9/2', '10/2 - 16/2', '17/2 - 23/2', '24/2 - 2/3', '3/3 - 9/3', '10/3'];
  const w5 = wk.slice(0, 5), d5 = ['00:00', '01:00', '02:00', '03:00', '04:00'];

  sec(308, 712);
  titleRow(322, 'Temperatura', 60, 1, [['Temperatura Media', '12.5°C', 35], ['Temperatura Mínima', '0.0°C', 27], ['Temperatura Máxima', '14.5°C', 32]]);
  legend(413, '#4b8f78', '#7f9468', 'Temperatura media semanal (°C)', '#1c3a30', '#3c4030'); yax(424, 526, 8);
  o += P('M132 468C155 460 165 444 185 444S220 480 242 477 280 448 315 445 370 465 402 470 460 447 505 443 550 458 565 455 595 443 610 445 640 480 674 525', '#8fd0b4', 2.500) + P('M132 462C155 450 165 435 185 434S215 468 242 468 280 438 315 434 370 458 402 462 460 440 510 435 550 448 570 443 600 430 615 436 645 470 674 518', '#5f7d58', 2.500);
  ticks(540, 11, 133, 673, i => wk[i]);
  table(561, 'Semana', w5, 468, 58, 681, 63, '9.9°C (3.8/19.8)', '10.5°C (5.8/18.6)');

  sec(722, 1130);
  titleRow(741, 'Precipitaciones', 72, 0, [['Precipitación Total', '522.0mm', 46], ['Días con lluvia', '2/3 (62.5mm)', 66], ['Promedio Diario', '2.6mm', 34]]);
  legend(832, '#5a5596', '#6f8fb8', 'Precipitaciones por hora (mm)', '#5a5596', '#8fb8d0'); yax(843, 948, 7, 138);
  [173, 195, 240, 443, 555, 578].forEach(x => o += R(x, 855, 8, 93, '#5d5796')); [430, 452, 475, 520, 543, 587].forEach(x => o += R(x, 897, 8, 51, '#5f95b4'));
  ticks(957, 24, 159, 678, i => String(i).padStart(2, 0) + ':00');
  table(979, 'Hora', d5, 530, 27, 681, 27, '0.0 mm', '0.0 mm');

  sec(1140, 1488);
  titleRow(1159, 'Viento', 30, 2, [['Velocidad Media', '17.6 km/h', 47], ['Velocidad Máxima', '51.6 km/h', 50], ['Dirección Predominante', 'W', 10]]);
  legend(1250, '#2f6a4c', '#c8d4cc', 'Velocidad del viento por hora (km/h)', '#1c4030', '#444'); yax(1258, 1288, 3, 138);
  o += P('M141 1276C180 1268 200 1275 240 1274S300 1276 340 1268 400 1272 430 1268 500 1270 530 1272 600 1268 640 1274 680 1272 687 1270V1287H141Z', 'none', 0, '#28363a') + P('M141 1276C180 1266 200 1274 240 1274S300 1272 340 1267 400 1270 430 1266 500 1270 530 1270 600 1268 640 1272 680 1270 687 1269', '#7fb8a4', 3) + P('M141 1287H687', '#444', 1.500);
  ticks(1297, 24, 142, 680, i => String(i).padStart(2, 0) + ':00');
  o += TL(342, 1322, 7, 'Direcciones predominantes del viento', 122, '#666');
  // Wind rose
  const wedge = (a0, a1, r, f) => { const q = a => (a - 90) * Math.PI / 180, cx = 380, cy = 1397; o += P(`M${cx} ${cy}L${cx + r * Math.cos(q(a0))} ${cy + r * Math.sin(q(a0))}A${r} ${r} 0 0 1 ${cx + r * Math.cos(q(a1))} ${cy + r * Math.sin(q(a1))}Z`, '#ddd6', .8, f); };
  [[0, 45, 48, '#9b8a80'], [45, 90, 47, '#7e8c9c'], [90, 135, 48, '#2a8068'], [135, 180, 26, '#8a7f55'], [180, 225, 14, '#8a7050'], [225, 270, 56, '#3b3192'], [270, 315, 67, '#7fa8a0'], [315, 360, 65, '#6a93bd']].forEach(a => wedge(...a));
  o += P('M313 1396A67 67 0 0 1 333 1350', '#a9bb5c', 3);
  ['#8f8a80', '#5a8f90', '#2e8a66', '#a8885a', '#a8885a', '#4a8f5a', '#5f86a8', '#6aa0b0'].forEach((c, i) => o += R(648, 1344 + i * 11.500, 22, 8, c) + T(673, 1351 + i * 11.500, 6.500, ['N', 'NE', 'E', 'SE', 'S', 'SW', 'W', 'NW'][i], '#666'));

  sec(1500, 1905);
  titleRow(1517, 'Humedad', 45, 1, [['Humedad Media', '62.4%', 32], ['Humedad Máxima', '94.0%', 30], ['Humedad Mínima', '0.0%', 26]]);
  legend(1609, '#35a868', '#4a3f9c', 'Humedad media semanal (%)', 'none', '#3a3190'); yax(1618, 1724, 11, 137);
  const hum = 'M147 1655C190 1662 220 1666 250 1666S290 1658 310 1660 350 1670 375 1666 400 1656 430 1657 480 1652 510 1650 550 1654 570 1652 600 1628 615 1630 635 1650 645 1675 665 1715 674 1724';
  o += P(hum + 'H147Z', 'none', 0, '#3a3f8c') + P(hum, '#3f8f98', 3) + P('M645 1675Q662 1712 674 1724', '#40b070', 2.500);
  ticks(1734, 11, 147, 673, i => wk[i]);
  table(1757, 'Semana', w5, 459, 78, 681, 79, '63.4% (22.8% - 79.0%)', '61.3% (27.8% - 79.5%)');

  sec(1920, 2170);
  titleRow(1936, 'Presión Atmosférica', 94, 0, [['Presión Media', '991.2 hPa', 50], ['Presión Mínima', '0.0 hPa', 38], ['Presión Máxima', '1021.9 hPa', 54]]);
  legend(2027, '#3f9c8c', '#3a4a9c', 'Presión atmosférica por hora (hPa)'); yax(2037, 2142, 6, 140);
  o += P('M153 2100C165 2105 180 2116 200 2116S240 2118 262 2116 300 2080 340 2060 365 2055 383 2038 410 2048 430 2062 470 2095 500 2112 520 2130 545 2105 580 2085 610 2065 640 2045 660 2042 672 2050 681 2052', '#3450ac', 3) + P('M153 2098C165 2104 175 2115 187 2111S205 2112 215 2120 240 2128 250 2124 262 2105 275 2102 292 2100 305 2088 345 2075 360 2066 372 2045 383 2044 400 2060 410 2062 425 2062 440 2070 475 2092 490 2098 508 2128 520 2127 545 2105 560 2095 590 2080 600 2077 625 2074 635 2062 655 2050 665 2054 675 2055 681 2060', '#86b0c6', 2.600);
  ticks(2152, 24, 153, 681, i => String(i).padStart(2, 0) + ':00');

  sec(2185, 2585);
  titleRow(2200, 'Horas de Sol', 61, 1, [['Promedio Diario', '7.5 h', 23], ['Días de Sol', '26/3 (10.2h)', 52], ['Total de Horas', '1856.0 h', 42]]);
  legend(2291, '#b5a84c', '#5e8a3a', 'Horas de sol semanales (h)', '#b5a84c', '#5a7a34'); yax(2300, 2405, 9, 134);
  [[147, 2355, 2355], [197, 2329, 2328], [247, 2319, 2319], [297, 2316, 2316], [347, 2312, 2319], [396, 2316, 2315], [446, 2307, 2307], [495, 2326, 2323], [545, 2321, 2321], [594, 2367, 2367]].forEach(([x, a, b]) => o += R(x, a, 19, 2405 - a, '#a99c4c') + R(x + 19, b, 20, 2405 - b, '#4c762c'));
  ticks(2416, 11, 167, 663, i => wk[i]);
  table(2439, 'Semana', w5, 450, 95, 681, 97, '53.1 h (Media: 6.6, Máx: 9.5)', '53.1 h (Media: 6.6, Máx: 9.2)');

  sec(2600, 2858);
  o += TL(117, 2622, 11.500, 'Comparativa Meteorológica', 129, '#ddd', 600) + R(673, 2613, 8, 8, '#ddd', 2) + R(117, 2635, 572, 26, '#15293a', 3) + C(132, 2643, 6, '#2f80cc') + TL(147, 2643, 7.500, 'Este gráfico compara las métricas meteorológicas normalizadas para cada ubicación, permitiendo ver de un vistazo las diferencias entre ellas en', 513, '#2a6ca5') + TL(147, 2655, 7.500, 'el período', 27, '#2a6ca5');
  o += R(348, 2674, 22, 7, '#8a6f30', 0, '#b89440', 1.500) + TL(373, 2680, 7, 'Huércal-Overa', 41, '#777') + R(418, 2674, 22, 7, '#6f3648', 0, '#a8506a', 1.500) + TL(443, 2680, 7, 'Vera', 12, '#777');
  o += P('M403 2694V2782M350 2757L403 2782 456 2757M370 2828L403 2782 436 2828', '#2c2c2c', 1.500) + P('M359 2758L402 2771 427 2764 430 2811 389 2791Z', '#d8a088', 1.800, '#8c5a44') + [[359, 2758], [402, 2771], [427, 2764], [430, 2811], [389, 2791]].map(p => C(...p, 2.500, '#f3e6dc')).join('');
  o += T(403, 2696, 7, 'Temperatura', '#888', 'middle') + T(315, 2748, 7, 'Horas de Sol', '#888', 'middle') + T(482, 2748, 7, 'Viento', '#888', 'middle') + T(348, 2840, 7, 'Presión', '#888', 'middle') + T(459, 2840, 7, 'Humedad', '#888', 'middle');

  // Summary cards
  o += R(115, 2872, 577, 965, '#212121', 4) + R(134, 2890, 12, 13, 'none', 2, '#2a7aa8') + TL(152, 2900, 10.500, 'Estadísticas resumen', 103, '#ddd', 600);
  const cards = [
    [2916, 120, '#fde8ea', '#c8505a', 'Temperatura', 60, 430, 605, [['Mínima', '2.9°C', '4.0°C'], ['Media', '10.7°C', '11.2°C'], ['Máxima', '19.8°C', '18.6°C']]],
    [3045, 138, '#e1f1fd', '#3f86c8', 'Precipitación', 60, 432, 592, [['Total', '272.8mm', '249.8mm'], ['Media diaria', '1.4mm', '1.3mm'], ['Días con lluvia', '26', '25'], ['Día más lluvioso', '3/3 (29.6mm)', '3/3 (31.4mm)']]],
    [3189, 120, '#eceef0', '#667', 'Viento', 30, 474, 611, [['Velocidad media', '17.2 km/h', '17.8 km/h'], ['Velocidad máxima', '51.2 km/h', '47.6 km/h'], ['Dirección predominante', 'NW', 'W']]],
    [3318, 119, '#def6fa', '#1aa0b4', 'Humedad', 45, 444, 614, [['Mínima', '0%', '0%'], ['Media', '63%', '62%'], ['Máxima', '94%', '93%']]],
    [3446, 119, '#dff1ee', '#26887c', 'Presión atmosférica', 93, 413, 592, [['Mínima', '0 hPa', '0 hPa'], ['Media', '987 hPa', '987 hPa'], ['Máxima', '1021 hPa', '1020 hPa']]],
    [3573, 120, '#fef7dc', '#d8a020', 'Insolación', 48, 439, 597, [['Media diaria', '7.4 h', '7.5 h'], ['Total', '507.2 h', '511.3 h'], ['Día más soleado', '26/2 (10.2h)', '26/2 (10.2h)']]],
    [3699, 120, '#e7e9f5', '#5560a8', 'Otros indicadores', 83, 445, 599, [['Índice UV máximo', '5.5', '5.6'], ['Visibilidad media', '17.2 km', '17.3 km'], ['Punto de rocío medio', '4.8°C', '5.9°C']]]];
  cards.forEach(([y, h, bg, c, t, w, c2, c3, rows]) => {
    o += R(125, y, 556, h, bg, 2) + C(137, y + 19, 2.500, 'none', c, 1.500) + TL(147, y + 22, 10, t, w, '#3a3a44', 500) + R(134, y + 34, 538, h - 43, '#202020', 3);
    o += TL(142, y + 48, 7.500, 'Indicador', 31, '#ddd', 500) + TL(c2 - 24, y + 48, 7.500, 'Huércal-Overa', 49, '#ddd', 500) + T(c3, y + 48, 7.500, 'Vera', '#ddd', 'middle', 500);
    rows.forEach((r, i) => { const yy = y + 67 + i * 18.800; o += P(`M136 ${yy - 12}H670`, '#333', 1.200) + C(147, yy - 3, 3, 'none', c, 1.500) + T(154, yy, 8, r[0], '#ddd', 'start', 500) + T(c2, yy, 8, r[1], '#ddd', 'middle', 500) + T(c3, yy, 8, r[2], '#ddd', 'middle', 500); });
  });
  o += R(59, 3876, 691, 77, '#212121') + footer(402, 3902, .63) + TL(343, 3924, 8.500, '2025 —', 27, '#ccc') + TL(374, 3924, 8.500, 'Retro Forecast Pro v1', 87, '#fff', 700) + TL(364, 3938, 7, 'Powered by', 35, '#aaa') + TL(402, 3938, 7, 'Open-Meteo', 36, '#2e6ca0');
  document.getElementById('his').innerHTML = o;
}
</script>
</body>
</html>
